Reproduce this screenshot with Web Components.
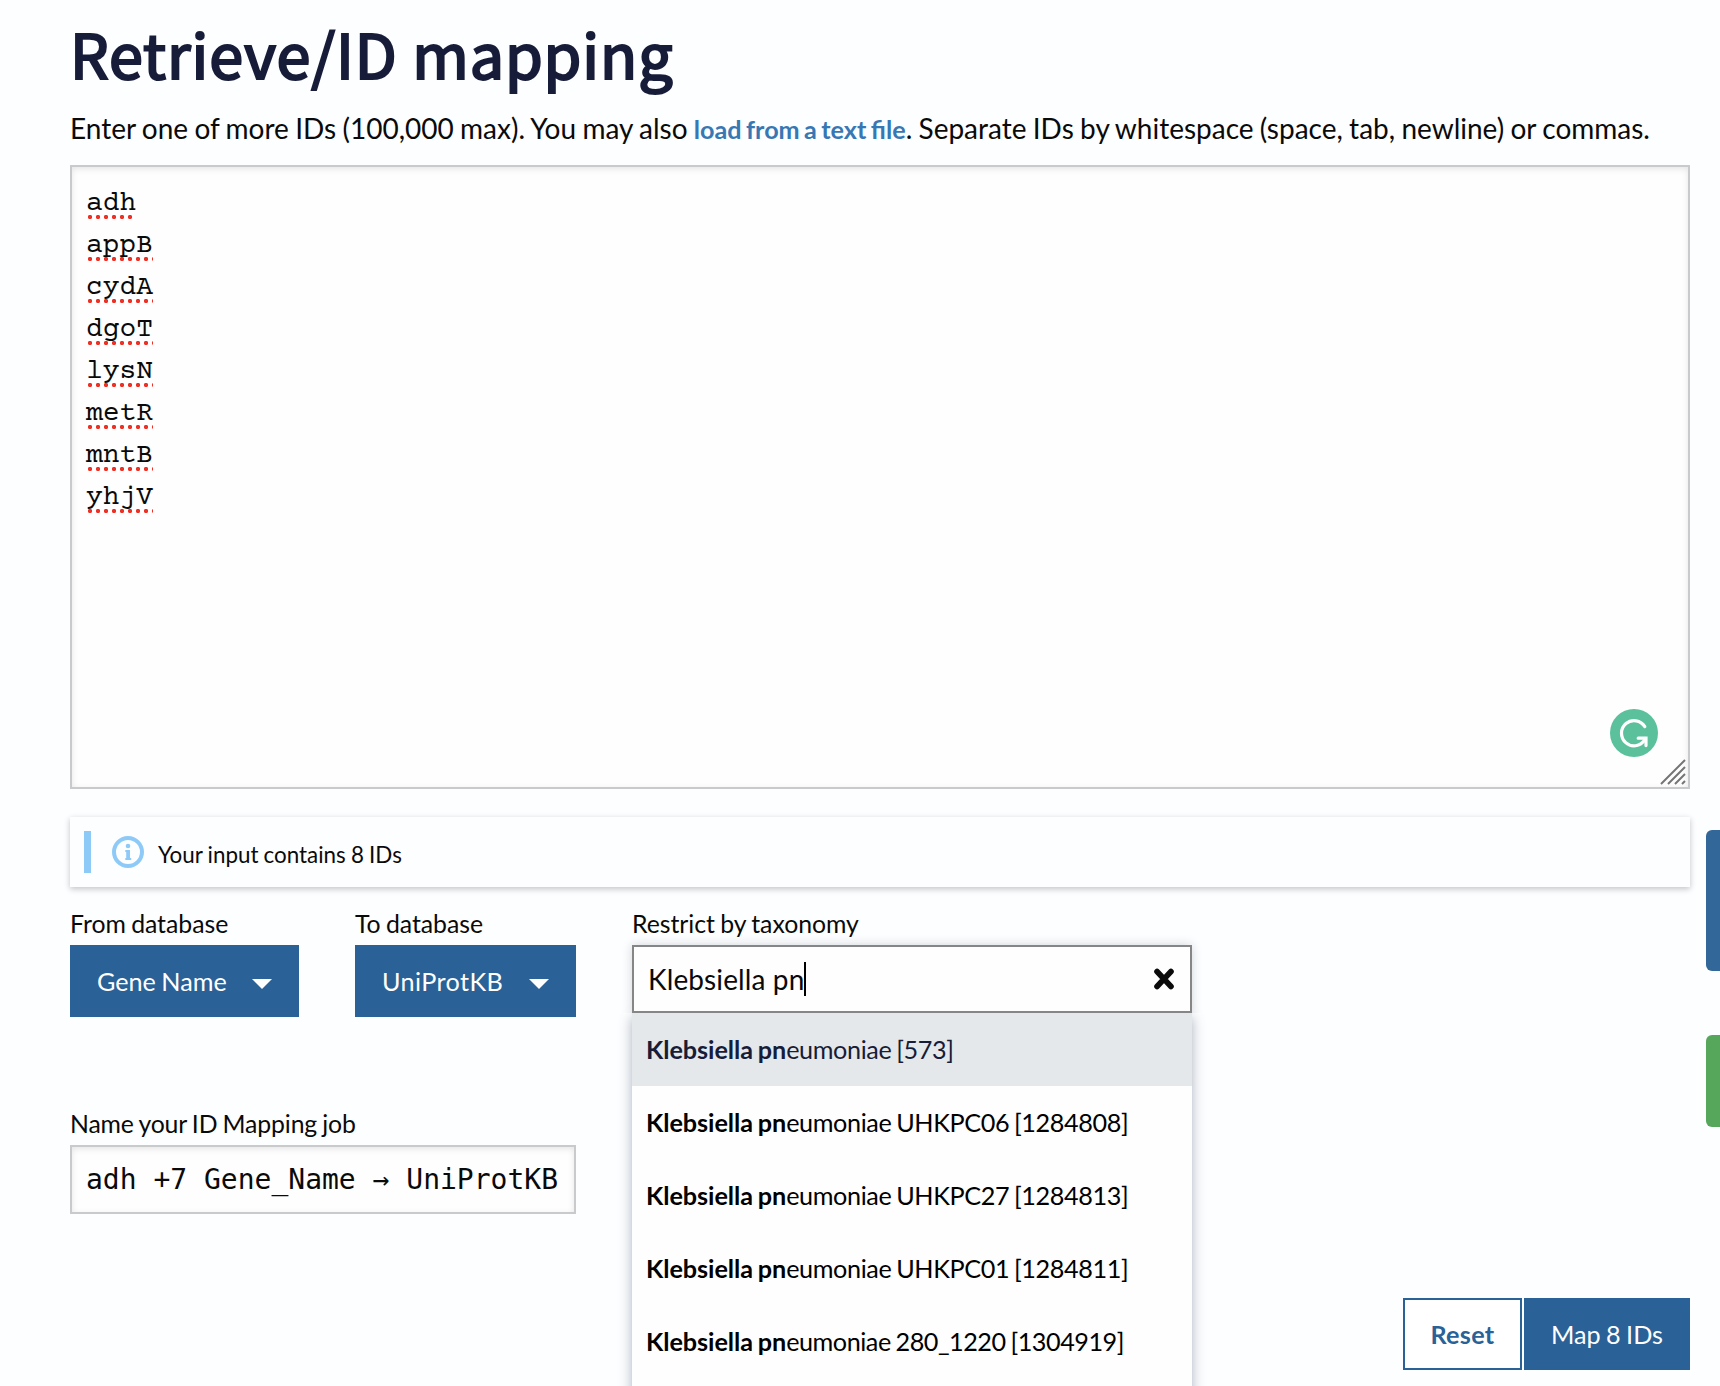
<!DOCTYPE html>
<html lang="en">
<head>
<meta charset="utf-8">
<title>Retrieve/ID mapping</title>
<style>
html,body{margin:0;height:1386px;overflow:hidden;background:#fdfeff}
body{font-family:Lato,sans-serif;color:#0a0a0a}
</style>
</head>
<body>
<id-mapping-page></id-mapping-page>
<script>
const define = (name, html) => customElements.define(name, class extends HTMLElement {
  constructor() {
    super();
    const t = document.createElement('template');
    t.innerHTML = html;
    this.attachShadow({mode: 'open'}).appendChild(t.content.cloneNode(true));
  }
});

define('field-label', `<style>
:host{display:block;height:40px;box-sizing:border-box;padding-top:1px;font-size:24.8px;line-height:36px;word-spacing:-1px;letter-spacing:-.03px;white-space:nowrap}
</style><slot></slot>`);

define('drop-button', `<style>
:host{display:flex;align-items:center;justify-content:space-between;height:72px;box-sizing:border-box;padding:0 27px;background:#2a6196;color:#fff;font-size:25.2px;line-height:72px;word-spacing:-1px;white-space:nowrap}
svg{display:block;width:20px;height:10px;margin-top:6px}
</style><span><slot></slot></span><svg viewBox="0 0 20 10"><path d="M0 0H20L10 10Z" fill="#fff"/></svg>`);

define('action-button', `<style>
:host{display:block;height:72px;box-sizing:border-box;border:2px solid #2a6196;background:#2a6196;color:#fff;font-size:25.2px;line-height:68px;text-align:center;word-spacing:-1px;white-space:nowrap}
:host([outline]){background:#fff;color:#2a6196;font-weight:700;letter-spacing:.3px}
</style><slot></slot>`);

define('id-line', `<style>
:host{display:block;height:42px;line-height:42px}
span{display:inline-block;position:relative;height:42px}
i{position:absolute;left:2px;right:0;top:32px;height:4px;background:radial-gradient(circle at 2px 2px,#ee3124 1.8px,rgba(238,49,36,0) 2.5px) 0 0/8px 4px repeat-x}
:host([short]) i{right:4px}
</style><span><slot></slot><i></i></span>`);

define('grammar-badge', `<style>
:host{display:block;width:48px;height:48px}svg{display:block}
</style><svg width="48" height="48" viewBox="0 0 48 48"><circle cx="24" cy="24" r="24" fill="#5bc09c"/>
<path d="M34.8 17.6A12.6 12.6 0 1 0 34.6 31.2" fill="none" stroke="#fff" stroke-width="3.2" stroke-linecap="round"/><path d="M28.2 29.2H36V36.6" fill="none" stroke="#fff" stroke-width="3.2" stroke-linecap="round"/></svg>`);

define('id-textarea', `<style>
:host{display:block;position:relative;height:624px;box-sizing:border-box;border:2px solid #c9cacb;background:#fefefe;box-shadow:inset 0 2px 6px rgba(10,10,10,.1);padding:16px 14px 14px;font:28px/42px "Courier Prime","Liberation Mono",monospace}
grammar-badge{position:absolute;left:1538px;top:542px}
.grip{position:absolute;right:2px;bottom:2px;display:block}
</style><slot></slot><grammar-badge></grammar-badge>
<svg class="grip" width="26" height="26" viewBox="0 0 26 26"><path d="M1 25L25 1M8 25L25 8M15 25L25 15M22 25L25 22" stroke="#757575" stroke-width="2" fill="none"/></svg>`);

define('info-message', `<style>
:host{display:flex;height:70px;box-sizing:border-box;padding:14px;background:#fdfeff;box-shadow:0 2px 6px rgba(10,10,10,.24);font-size:22.4px;line-height:48px;word-spacing:-.6px}
b{width:7px;height:42px;background:#8ecaf8}
svg{display:block;margin:5px 14px 0 21px}
</style><b></b><svg width="32" height="32" viewBox="0 0 32 32"><circle cx="16" cy="16" r="14" fill="none" stroke="#8ecaf8" stroke-width="4"/><circle cx="16" cy="10" r="2.3" fill="#8ecaf8"/><path d="M13.3 14H18V22H19.2V24H13.3V22H14.2V16H13.3Z" fill="#8ecaf8"/></svg><span><slot></slot></span>`);

define('name-input', `<style>
:host{display:block;height:69px;box-sizing:border-box;border:2px solid #c9cacb;background:#fefefe;box-shadow:inset 0 2px 6px rgba(10,10,10,.1);padding-left:14px;font:28px/65px "DejaVu Sans Mono",monospace;white-space:pre}
</style><slot></slot>`);

define('taxon-option', `<style>
:host{display:block;height:73px;box-sizing:border-box;padding-left:14px;font-size:25.2px;line-height:73px;color:#000;white-space:nowrap;letter-spacing:-.38px;word-spacing:-1.2px}
:host([active]){background:#e4e8eb;color:#171c39}
b{font-weight:700;letter-spacing:-.06px}
</style><b>Klebsiella pn</b><slot></slot>`);

define('taxon-search', `<style>
:host{display:block;position:relative;height:68px}
.box{position:relative;display:flex;justify-content:space-between;align-items:center;height:68px;box-sizing:border-box;border:2px solid #868686;background:#fefefe;padding:0 16px 0 14px;font-size:28px;line-height:64px;letter-spacing:.12px;box-shadow:0 0 10px rgba(10,30,50,.18);clip-path:inset(-12px -12px 0 -12px)}
.val{display:flex;align-items:center}
.cur{width:2px;height:34px;background:#000}
.menu{position:absolute;left:0;top:68px;width:100%;height:400px;background:#fefefe;box-shadow:0 4px 12px rgba(60,75,100,.42)}
svg{display:block}
</style>
<div class="menu"><slot></slot></div>
<div class="box"><div class="val"><span>Klebsiella pn</span><span class="cur"></span></div>
<svg width="20" height="22" viewBox="0 0 20 22"><path d="M3 3.5L17 18.5M17 3.5L3 18.5" stroke="#0a0a0a" stroke-width="5.6" stroke-linecap="round"/></svg></div>`);

define('side-tabs', `<style>
:host{position:absolute;right:0;top:830px;display:flex;flex-direction:column;gap:64px;width:14px}
i{display:block;height:141px;background:#326799;border-radius:6px 0 0 6px}
i+i{height:92px;background:#56a65b}
</style><i></i><i></i>`);

define('id-mapping-page', `<style>
:host{display:block;position:relative;width:1720px;height:1386px;overflow:hidden;box-sizing:border-box;padding:13px 30px 0 70px}
h1{margin:0 0 14px;height:80px;font:400 61px/80px "Noto Sans CJK SC",sans-serif;color:#171c39;-webkit-text-stroke:2.2px #171c39;letter-spacing:.9px;white-space:nowrap}
p{margin:0 0 16px;height:42px;font-size:28px;line-height:42px;word-spacing:-.88px;white-space:nowrap}
a{color:#3778b4;font-weight:700;font-size:25.2px;word-spacing:-1.7px}
info-message{margin:28px 0 18px}
.form{display:flex;gap:56px;height:393px}
.left{width:506px}
.dbs{display:flex;gap:56px;height:200px}
.from{width:229px}.to{width:221px}.tax{width:560px}
.to drop-button{letter-spacing:.4px}
.job{letter-spacing:-.14px}
.actions{display:flex;justify-content:flex-end;gap:2px}
.reset{width:119px}.map{width:166px}
.eighty{letter-spacing:-.46px}
</style>
<h1>Retrieve/ID mapping</h1>
<p>Enter one of more IDs (100,000 max). You may also <a>load from a text file</a>. Separate IDs by whitespace (space, tab, newline) or commas.</p>
<id-textarea><id-line short>adh</id-line><id-line>appB</id-line><id-line>cydA</id-line><id-line>dgoT</id-line><id-line>lysN</id-line><id-line>metR</id-line><id-line>mntB</id-line><id-line>yhjV</id-line></id-textarea>
<info-message>Your input contains 8 IDs</info-message>
<div class="form">
<div class="left"><div class="dbs">
<div class="from"><field-label>From database</field-label><drop-button>Gene Name</drop-button></div>
<div class="to"><field-label>To database</field-label><drop-button>UniProtKB</drop-button></div></div>
<field-label class="job">Name your ID Mapping job</field-label><name-input>adh +7 Gene_Name → UniProtKB</name-input></div>
<div class="tax"><field-label>Restrict by taxonomy</field-label><taxon-search>
<taxon-option active>eumoniae [573]</taxon-option><taxon-option>eumoniae UHKPC06 [1284808]</taxon-option><taxon-option>eumoniae UHKPC27 [1284813]</taxon-option><taxon-option>eumoniae UHKPC01 [1284811]</taxon-option><taxon-option class="eighty">eumoniae 280_1220 [1304919]</taxon-option></taxon-search></div>
</div>
<div class="actions"><action-button class="reset" outline>Reset</action-button><action-button class="map">Map 8 IDs</action-button></div>
<side-tabs></side-tabs>`);
</script>
</body>
</html>
